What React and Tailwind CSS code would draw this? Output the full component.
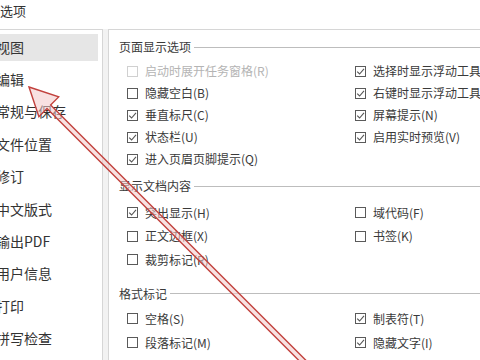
import React from 'react';

const navItems = ['视图', '编辑', '常规与保存', '文件位置', '修订', '中文版式', '输出PDF', '用户信息', '打印', '拼写检查'];

const sections = [
    {
        title: '页面显示选项',
        top: 'mt-[9px]',
        gap: 'mt-[5px]',
        rowH: 'h-[22px]',
        rows: [
            [{ label: '启动时展开任务窗格(R)', disabled: true }, { label: '选择时显示浮动工具栏(O)', checked: true }],
            [{ label: '隐藏空白(B)' }, { label: '右键时显示浮动工具栏(G)', checked: true }],
            [{ label: '垂直标尺(C)', checked: true }, { label: '屏幕提示(N)', checked: true }],
            [{ label: '状态栏(U)', checked: true }, { label: '启用实时预览(V)', checked: true }],
            [{ label: '进入页眉页脚提示(Q)', checked: true }, null],
        ],
    },
    {
        title: '显示文档内容',
        top: 'mt-[8px]',
        gap: 'mt-[7px]',
        rowH: 'h-[23.5px]',
        rows: [
            [{ label: '突出显示(H)', checked: true }, { label: '域代码(F)' }],
            [{ label: '正文边框(X)' }, { label: '书签(K)' }],
            [{ label: '裁剪标记(R)' }, null],
        ],
    },
    {
        title: '格式标记',
        top: 'mt-[14px]',
        gap: 'mt-[5px]',
        rowH: 'h-[24px]',
        rows: [
            [{ label: '空格(S)' }, { label: '制表符(T)', checked: true }],
            [{ label: '段落标记(M)' }, { label: '隐藏文字(I)', checked: true }],
        ],
    },
];

const Checkbox = ({ checked, disabled }) => (
    <span
        className={`shrink-0 w-[11px] h-[11px] border bg-white flex items-center justify-center ${
            disabled ? 'border-[#d0d0d0]' : 'border-[#5a5a5a]'
        }`}
    >
        {checked && (
            <svg width="9" height="9" viewBox="0 0 9 9">
                <polyline points="1.2,4.6 3.6,7 8,1.8" fill="none" stroke="#555" strokeWidth="1.1" />
            </svg>
        )}
    </span>
);

const Option = ({ item, h }) => {
    if (!item) return <div className={h} />;
    return (
        <div className={`${h} flex items-center gap-[7px] whitespace-nowrap`}>
            <Checkbox checked={item.checked} disabled={item.disabled} />
            <span className={`text-[12px] leading-none ${item.disabled ? 'text-[#b4b4b4]' : 'text-[#3a3a3a]'}`}>
                {item.label}
            </span>
        </div>
    );
};

const App = () => {
    return (
        <div className="relative w-[480px] h-[360px] overflow-hidden bg-white font-['Noto_Sans_CJK_SC','Microsoft_YaHei',sans-serif]">
            <div className="h-[29px] pt-[3px] text-[13px] leading-[16px] text-[#333]">选项</div>
            <div className="flex h-[331px] bg-[#f2f2f2]">
                {/* left navigation */}
                <nav className="w-[103px] bg-white border-t border-r border-[#d6d6d6] pt-[1px]">
                    {navItems.map((name, i) => (
                        <div key={name} className="h-[32.4px] flex items-center">
                            <div
                                className={`h-[27px] w-full flex items-center pl-0 -ml-[4px] text-[14px] text-[#333] ${
                                    i === 0 ? 'bg-[#e6e6e6]' : ''
                                }`}
                            >
                                {name}
                            </div>
                        </div>
                    ))}
                </nav>
                {/* right options */}
                <div className="ml-[5px] flex-1 bg-white border-t border-l border-[#d6d6d6] overflow-hidden pl-[10px]">
                    {sections.map((sec) => (
                        <div key={sec.title} className={sec.top}>
                            <div className="h-[16px] flex items-center gap-[3px]">
                                <span className="text-[12px] leading-none text-[#3a3a3a] whitespace-nowrap">{sec.title}</span>
                                <span className="flex-1 h-px bg-[#bdbdbd]" />
                            </div>
                            <div className={`${sec.gap} grid grid-cols-[228px_1fr] pl-[8px]`}>
                                {sec.rows.map((row, r) => (
                                    <React.Fragment key={r}>
                                        <Option item={row[0]} h={sec.rowH} />
                                        <Option item={row[1]} h={sec.rowH} />
                                    </React.Fragment>
                                ))}
                            </div>
                        </div>
                    ))}
                </div>
            </div>

            {/* red annotation arrow */}
            <svg className="absolute inset-0 pointer-events-none" width="480" height="360" viewBox="0 0 480 360">
                <polygon
                    points="29,87 58.7,96.9 50.6,105 343.8,398.2 340.2,401.8 47,108.6 38.9,116.7"
                    fill="#f3c9c9"
                    fillOpacity="0.55"
                    stroke="#c2413d"
                    strokeWidth="1.4"
                    strokeLinejoin="miter"
                />
            </svg>
        </div>
    );
};

export default App;
